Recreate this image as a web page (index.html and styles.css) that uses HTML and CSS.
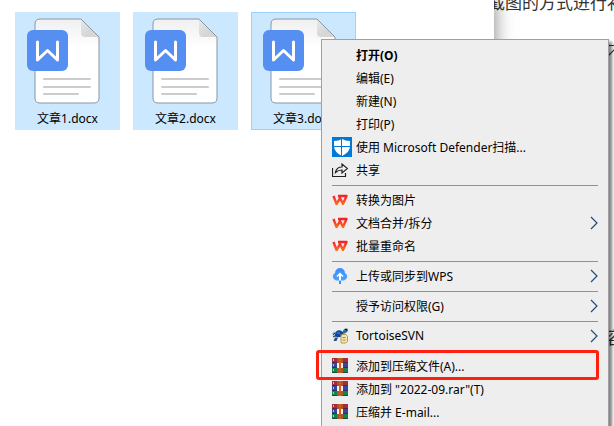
FILE: index.html
```
<!DOCTYPE html>
<html lang="zh-CN">
  <head>
    <meta charset="UTF-8">
    <meta name="viewport" content="width=device-width, initial-scale=1.0">
    <title>文章</title>
    <link rel="stylesheet" href="styles.css">
  </head>

  <body>
    <!-- shared icons -->
    <svg class="symbols" width="0" height="0" aria-hidden="true">
      <defs>
        <linearGradient id="paper" x1="0" y1="0" x2="0" y2="1">
          <stop offset="0" stop-color="#f0f0f0"/>
          <stop offset="0.35" stop-color="#fff"/>
        </linearGradient>
        <linearGradient id="fold" x1="0" y1="0" x2="1" y2="1">
          <stop offset="0" stop-color="#e8e8e8"/>
          <stop offset="0.6" stop-color="#d6d6d6"/>
        </linearGradient>
        <linearGradient id="wps-red" x1="0" y1="0" x2="0" y2="1">
          <stop offset="0" stop-color="#f5222b"/>
          <stop offset="1" stop-color="#ff6a1c"/>
        </linearGradient>
        <linearGradient id="cloud-blue" x1="0" y1="0" x2="0" y2="1">
          <stop offset="0" stop-color="#3f8cff"/>
          <stop offset="1" stop-color="#4ba3fb"/>
        </linearGradient>
      </defs>
      <symbol id="docx" viewBox="0 0 76 90">
        <path d="M13 3H54L72 21V82Q72 87 67 87H13Q8 87 8 82V8Q8 3 13 3Z" fill="url(#paper)" stroke="#8996a3"/>
        <path d="M54 3L72 21H58Q54 21 54 17Z" fill="url(#fold)"/>
        <path d="M54 3L72 21" stroke="#8996a3"/>
        <path d="M17 63H63M17 71H63M17 78H51" stroke="#ccc" stroke-width="2" stroke-linecap="round"/>
        <rect y="14" width="41" height="41" rx="6" fill="#558ff2"/>
        <path d="M10.500 26V44L20.500 34.500L30.500 44V26" fill="none" stroke="#fff" stroke-width="3" stroke-linecap="round" stroke-linejoin="round"/>
      </symbol>
      <symbol id="defender" viewBox="0 0 20 20">
        <rect width="20" height="20" fill="#0078d7"/>
        <path d="M10 2Q13 4 18 4V9Q18 15 10 19Q2 15 2 9V4Q7 4 10 2Z" fill="#fff"/>
        <path d="M9.500 2V19M2 9.500H18" stroke="#0078d7"/>
      </symbol>
      <symbol id="share" viewBox="0 0 16 16">
        <path d="M0.500 6V14.500H13.500V11M3.500 10.500Q4.500 5 10 5V2L15.500 6.500L10 11V8Q6 8 3.500 10.500Z" fill="none" stroke="#222" stroke-width="1.200"/>
      </symbol>
      <symbol id="wps" viewBox="0 0 16 11">
        <path d="M1.500 1.500L4.500 9.500L8.500 3M6 1.500H14.500L11 9.500L7.500 2.500" fill="none" stroke="url(#wps-red)" stroke-width="2.400" stroke-linejoin="round"/>
      </symbol>
      <symbol id="cloud" viewBox="0 0 16 16">
        <path d="M4 12.500A4 4 0 0 1 3 5A5 5 0 0 1 13 5A4 4 0 0 1 12 12.500Z" fill="url(#cloud-blue)"/>
        <path d="M8 13V6" stroke="#fff" stroke-width="2"/>
        <path d="M5 8.500L8 5.500L11 8.500" fill="none" stroke="#fff" stroke-width="1.500"/>
        <path d="M8 12.500V16" stroke="#3f8cff" stroke-width="2"/>
      </symbol>
      <symbol id="tortoise" viewBox="0 0 16 15">
        <path d="M0 5L2 3H5L4 7L1 8Z" fill="#a9c4d8"/>
        <path d="M1 6L3 4.500M1 8.500L4 7" stroke="#123" />
        <path d="M3 6Q4 1 8.500 2Q12 3 11.500 7Q8 10 3 8Z" fill="#12459b"/>
        <path d="M5 4.500H8M8 6.500H10" stroke="#4a9be8"/>
        <path d="M11 5V2L13 0H15.500V3L13 5Z" fill="#2c6f9c"/>
        <path d="M13 1H15V2.500" fill="none" stroke="#111"/>
        <path d="M3 9L1.500 12.500H4.500L6 9" fill="#24547c"/>
        <path d="M10 6H14L15.500 8V13L13.500 14.500H9V8Z" fill="#f4e6ad" stroke="#b69b4d"/>
        <path d="M10.500 9H13.500M10.500 11.500H13.500" stroke="#9f8d55"/>
      </symbol>
      <symbol id="rar" viewBox="0 0 16 16">
        <path d="M0 0H16V5H0Z" fill="#a32b3c"/>
        <path d="M0 5H16V10H0Z" fill="#35469c"/>
        <path d="M0 10H16V15H0Z" fill="#11854a"/>
        <path d="M0 4.500H16M0 9.500H16M0 14.500H16" stroke="#26213f" stroke-opacity="0.600"/>
        <path d="M1.500 1V3M1.500 6V8M1.500 11V13" stroke="#e6c34a"/>
        <path d="M5 0H11V15H5Z" fill="#b5521f"/>
        <path d="M8 0V15" stroke="#dc8a35" stroke-dasharray="1 1"/>
        <path d="M6 10V5M10 10V5" stroke="#f5f0e8" stroke-width="2"/>
        <path d="M8 4V10" stroke="#e4572b" stroke-width="2"/>
      </symbol>
      <symbol id="arrow" viewBox="0 0 8 14">
        <path d="M1 1L7 7L1 13" fill="none" stroke="#234a7c" stroke-width="1.200"/>
      </symbol>
      <symbol id="stroke" viewBox="0 0 12 12">
        <path d="M2 10L10 2" fill="none" stroke="#333" stroke-width="1.200"/>
      </symbol>
    </svg>

    <div class="article">
      <p>截图的方式进行补</p>
      <div class="article-box">
        <svg class="stroke"><use href="#stroke"/></svg>
        <span>容</span>
      </div>
    </div>

    <div class="explorer">
      <div class="file">
        <svg class="file-icon"><use href="#docx"/></svg>
        <span>文章1.docx</span>
      </div>
      <div class="file">
        <svg class="file-icon"><use href="#docx"/></svg>
        <span>文章2.docx</span>
      </div>
      <div class="file focused">
        <svg class="file-icon"><use href="#docx"/></svg>
        <span>文章3.docx</span>
      </div>
    </div>

    <div class="menu">
      <button class="item default">打开(O)</button>
      <button class="item">编辑(E)</button>
      <button class="item">新建(N)</button>
      <button class="item">打印(P)</button>
      <button class="item"><svg class="icon large"><use href="#defender"/></svg>使用 Microsoft Defender扫描...</button>
      <button class="item"><svg class="icon"><use href="#share"/></svg>共享</button>
      <hr>
      <button class="item"><svg class="icon"><use href="#wps"/></svg>转换为图片</button>
      <button class="item"><svg class="icon"><use href="#wps"/></svg>文档合并/拆分<svg class="arrow"><use href="#arrow"/></svg></button>
      <button class="item"><svg class="icon"><use href="#wps"/></svg>批量重命名</button>
      <hr>
      <button class="item"><svg class="icon"><use href="#cloud"/></svg>上传或同步到WPS<svg class="arrow"><use href="#arrow"/></svg></button>
      <hr>
      <button class="item">授予访问权限(G)<svg class="arrow"><use href="#arrow"/></svg></button>
      <hr>
      <button class="item"><svg class="icon"><use href="#tortoise"/></svg>TortoiseSVN<svg class="arrow"><use href="#arrow"/></svg></button>
      <hr>
      <button class="item marked"><svg class="icon"><use href="#rar"/></svg>添加到压缩文件(A)...</button>
      <button class="item"><svg class="icon"><use href="#rar"/></svg>添加到 "2022-09.rar"(T)</button>
      <button class="item"><svg class="icon"><use href="#rar"/></svg>压缩并 E-mail...</button>
    </div>
  </body>
</html>
```
FILE: styles.css
```
* { box-sizing: border-box; }
html { height: 100%; }
body {
  position: relative;
  height: 100%;
  margin: 0;
  overflow: hidden;
  background-color: white;
  color: black;
  font-family: "Noto Sans", "Noto Sans CJK SC", sans-serif;
  font-size: 12px;
}
.symbols {
  position: absolute;
}

/* document behind the explorer window */
.article {
  height: 100%;
  padding-left: 488px;
  overflow: hidden;
  color: #333;
  font-size: 17px;
  line-height: 24px;
  white-space: nowrap;
}
.article p {
  margin: -9px 0 0;
}
.article-box {
  display: flex;
  flex-direction: column;
  gap: 268px;
  margin-top: 30px;
  padding-left: 118px;
  border-top: 1px solid #333;
}
.stroke {
  width: 12px;
  height: 12px;
}

.explorer {
  position: absolute;
  top: 0;
  bottom: 0;
  left: 0;
  width: 494px;
  display: flex;
  align-items: flex-start;
  gap: 13px;
  padding: 12px 15px;
  background-color: white;
  box-shadow: 0 0 18px rgba(0, 0, 0, 0.5);
}
.file {
  width: 105px;
  height: 118px;
  display: flex;
  flex-direction: column;
  align-items: center;
  padding-top: 4px;
  background-color: #cce8ff;
  line-height: 18px;
}
.file.focused {
  padding-top: 3px;
  border: 1px solid #99d1ff;
}
.file-icon {
  width: 76px;
  height: 90px;
  margin: 0 5px 4px 0;
}

.menu {
  position: absolute;
  top: 39px;
  left: 321px;
  right: 5px;
  padding: 3px 0;
  background-color: #eee;
  border: 1px solid #a0a0a0;
  box-shadow: 3px 3px 3px rgba(0, 0, 0, 0.5);
}
.item {
  position: relative;
  display: flex;
  align-items: center;
  width: 100%;
  height: 23px;
  padding: 0 10px 0 34px;
  border: none;
  background: none;
  color: black;
  font: inherit;
  text-align: left;
  white-space: nowrap;
}
.item.default {
  font-weight: bold;
}
.icon {
  flex: none;
  width: 16px;
  height: 16px;
  margin: 0 8px 0 -24px;
}
.icon.large {
  width: 20px;
  height: 20px;
  margin-right: 4px;
}
.arrow {
  width: 8px;
  height: 14px;
  margin-left: auto;
}
.menu hr {
  height: 1px;
  margin: 4px 10px 2px;
  border: none;
  background-color: #919191;
}
/* red frame round the highlighted entry */
.marked::after {
  content: "";
  position: absolute;
  top: -4px;
  bottom: -3px;
  left: -6px;
  right: 9px;
  border: 3px solid #ff2010;
  border-radius: 3px;
}
```
